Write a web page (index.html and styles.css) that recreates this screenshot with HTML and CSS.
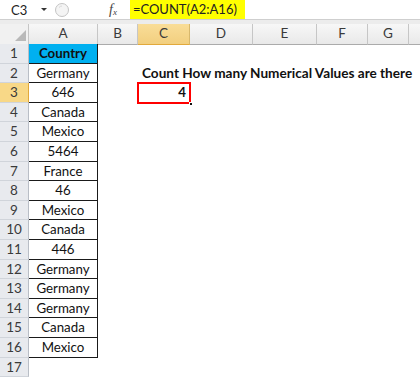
FILE: index.html
```html
<!DOCTYPE html>
<html>
<head>
<title>COUNT example</title>
<link rel="stylesheet" href="styles.css">
</head>
<body>
<div class="excel">

<div class="formula-bar">
  <div class="name-box">C3</div>
  <span class="drop"></span>
  <svg class="grip" width="16" height="16" viewBox="0 0 16 16">
    <circle cx="8" cy="8" r="6.5" fill="#f4f4f4" stroke="#c4c4c4" stroke-width="1"/>
    <path d="M5 5.5 A4 4 0 0 1 8 4" fill="none" stroke="#d8d8d8" stroke-width="1"/>
  </svg>
  <span class="fx">f<sub>x</sub></span>
  <div class="formula"><span class="formula-text">=COUNT(A2:A16)</span></div>
</div>
<div class="gap"></div>

<div class="sheet">
  <div class="row head">
    <div class="corner">
      <svg width="29" height="20" viewBox="0 0 29 20"><polygon points="26,6 26,17 15,17" fill="#b9b9b9"/></svg>
    </div>
    <div class="col-head">A</div>
    <div class="col-head">B</div>
    <div class="col-head selected">C</div>
    <div class="col-head">D</div>
    <div class="col-head">E</div>
    <div class="col-head">F</div>
    <div class="col-head">G</div>
    <div class="col-head"></div>
  </div>

  <div class="row"><div class="row-head">1</div><div class="cell a title">Country</div></div>
  <div class="row"><div class="row-head">2</div><div class="cell a">Germany</div>
    <div class="cell note">Count How many Numerical Values are there</div></div>
  <div class="row"><div class="row-head selected">3</div><div class="cell a">646</div>
    <div class="cell result">4</div></div>
  <div class="row"><div class="row-head">4</div><div class="cell a">Canada</div></div>
  <div class="row"><div class="row-head">5</div><div class="cell a">Mexico</div></div>
  <div class="row"><div class="row-head">6</div><div class="cell a">5464</div></div>
  <div class="row"><div class="row-head">7</div><div class="cell a">France</div></div>
  <div class="row"><div class="row-head">8</div><div class="cell a">46</div></div>
  <div class="row"><div class="row-head">9</div><div class="cell a">Mexico</div></div>
  <div class="row"><div class="row-head">10</div><div class="cell a">Canada</div></div>
  <div class="row"><div class="row-head">11</div><div class="cell a">446</div></div>
  <div class="row"><div class="row-head">12</div><div class="cell a">Germany</div></div>
  <div class="row"><div class="row-head">13</div><div class="cell a">Germany</div></div>
  <div class="row"><div class="row-head">14</div><div class="cell a">Germany</div></div>
  <div class="row"><div class="row-head">15</div><div class="cell a">Canada</div></div>
  <div class="row"><div class="row-head">16</div><div class="cell a">Mexico</div></div>
  <div class="row"><div class="row-head">17</div></div>
</div>

</div>
</body>
</html>
```

FILE: styles.css
```css
body {
    margin: 0;
    background: #fff;
    font-family: Lato, "Liberation Sans", sans-serif;
}

.excel {
    width: 420px;
    height: 377px;
    overflow: hidden;
}

/* formula bar */

.formula-bar {
    height: 20px;
    box-sizing: border-box;
    border-bottom: 1px solid #cfcfcf;
    display: flex;
    align-items: center;
    position: relative;
    font-size: 13px;
    color: #222;
}

.name-box {
    width: 38px;
    padding-left: 11px;
    box-sizing: border-box;
}

.drop {
    width: 0;
    height: 0;
    border-left: 3px solid transparent;
    border-right: 3px solid transparent;
    border-top: 3px solid #333;
    margin-left: 3px;
}

.grip {
    margin-left: 7px;
}

.fx {
    margin-left: 39px;
    font-family: "Liberation Serif", serif;
    font-style: italic;
    font-size: 14px;
    color: #444;
}

.fx sub {
    font-size: 9px;
    vertical-align: -1px;
}

.formula {
    margin-left: 13px;
    height: 19px;
    display: flex;
    align-items: center;
}

.formula-text {
    background: #ffff00;
    height: 19px;
    line-height: 19px;
    padding: 0 8px 0 3px;
}

.gap {
    height: 4px;
    background: #ececec;
}

/* sheet */

.row {
    display: grid;
    grid-template-columns: 29px 69px 40px 52px 63px 64px 51px 41px 60px;
    height: 19.6px;
    font-size: 13.3px;
    line-height: 18.6px;
    color: #111;
}

.row.head {
    height: 20px;
    line-height: 19px;
}

.corner {
    background: #f1f1f1;
    border-right: 1px solid #c6c6c6;
    border-bottom: 1px solid #ababab;
    height: 20px;
}

.corner svg {
    display: block;
}

.col-head {
    background: linear-gradient(#f7f7f7, #e9e9e9);
    border-right: 1px solid #c6c6c6;
    border-bottom: 1px solid #ababab;
    text-align: center;
    color: #3a3a3a;
    font-size: 13.5px;
}

.col-head.selected {
    background: linear-gradient(#f9dd98, #f2cf7f);
    border-bottom-color: #e2a93b;
    border-right-color: #d8b86c;
}

.row-head {
    grid-column: 1;
    background: #e8eaee;
    border-right: 1px solid #b9bec6;
    border-bottom: 1px solid #d0d4da;
    box-sizing: border-box;
    text-align: center;
    color: #3a3a3a;
    font-size: 13.5px;
}

.row-head.selected {
    background: #f8d887;
    border-right-color: #e2a93b;
}

.cell {
    box-sizing: border-box;
    white-space: nowrap;
}

.cell.a {
    grid-column: 2;
    border-right: 1px solid #1a1a1a;
    border-bottom: 1px solid #1a1a1a;
    text-align: center;
}

.cell.title {
    background: #00b0f0;
    font-weight: bold;
}

.cell.note {
    grid-column: 4;
    padding-left: 4px;
    font-weight: bold;
    font-size: 13.6px;
    overflow: visible;
}

.cell.result {
    grid-column: 4;
    position: relative;
    text-align: right;
    padding-right: 4px;
    font-weight: bold;
    outline: 2px solid #ff0000;
    outline-offset: -1px;
}

.cell.result::after {
    content: "";
    position: absolute;
    right: -3px;
    bottom: -3px;
    width: 4px;
    height: 4px;
    background: #111;
    border: 1px solid #fff;
    box-sizing: border-box;
}
```
